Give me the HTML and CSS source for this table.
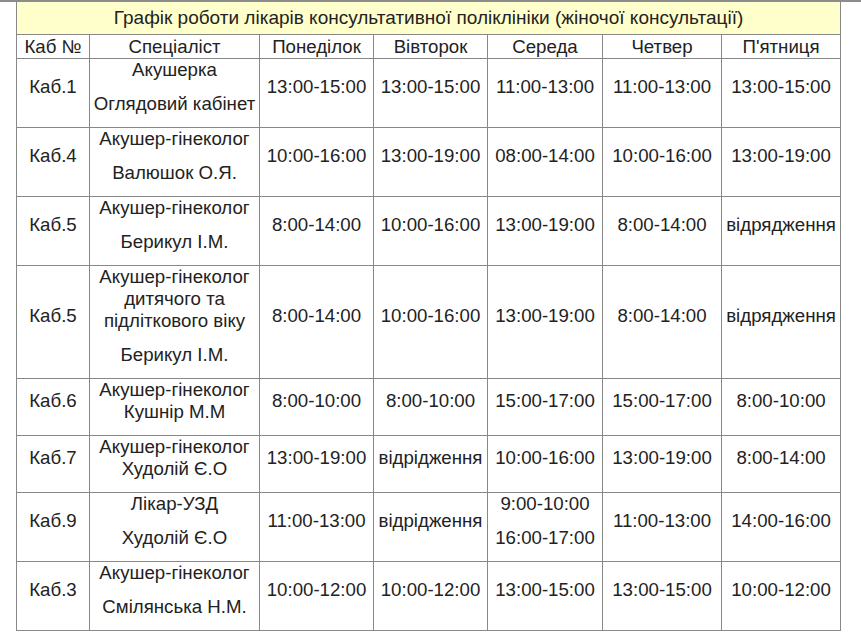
FILE: index.html
```html
<!DOCTYPE html>
<html lang="uk">
<head>
<meta charset="utf-8">
<title>Графік роботи лікарів</title>
<link rel="stylesheet" href="styles.css">
</head>
<body>
<div class="topline"></div>
<table class="schedule">
  <colgroup>
    <col class="c-cab"><col class="c-spec"><col class="c-mon"><col class="c-tue"><col class="c-wed"><col class="c-thu"><col class="c-fri">
  </colgroup>
  <tr class="title-row"><td colspan="7" class="title">Графік роботи лікарів консультативної поліклініки (жіночої консультації)</td></tr>
  <tr class="head-row">
    <td>Каб №</td><td>Спеціаліст</td><td>Понеділок</td><td>Вівторок</td><td>Середа</td><td>Четвер</td><td>П'ятниця</td>
  </tr>
  <tr>
    <td><p>Каб.1</p></td>
    <td><p>Акушерка</p><p>Оглядовий кабінет</p></td>
    <td><p>13:00-15:00</p></td><td><p>13:00-15:00</p></td><td><p>11:00-13:00</p></td><td><p>11:00-13:00</p></td><td><p>13:00-15:00</p></td>
  </tr>
  <tr>
    <td><p>Каб.4</p></td>
    <td><p>Акушер-гінеколог</p><p>Валюшок О.Я.</p></td>
    <td><p>10:00-16:00</p></td><td><p>13:00-19:00</p></td><td><p>08:00-14:00</p></td><td><p>10:00-16:00</p></td><td><p>13:00-19:00</p></td>
  </tr>
  <tr>
    <td><p>Каб.5</p></td>
    <td><p>Акушер-гінеколог</p><p>Берикул І.М.</p></td>
    <td><p>8:00-14:00</p></td><td><p>10:00-16:00</p></td><td><p>13:00-19:00</p></td><td><p>8:00-14:00</p></td><td><p>відрядження</p></td>
  </tr>
  <tr>
    <td><p>Каб.5</p></td>
    <td><p>Акушер-гінеколог<br>дитячого та<br>підліткового віку</p><p>Берикул І.М.</p></td>
    <td><p>8:00-14:00</p></td><td><p>10:00-16:00</p></td><td><p>13:00-19:00</p></td><td><p>8:00-14:00</p></td><td><p>відрядження</p></td>
  </tr>
  <tr>
    <td><p>Каб.6</p></td>
    <td><p>Акушер-гінеколог<br>Кушнір М.М</p></td>
    <td><p>8:00-10:00</p></td><td><p>8:00-10:00</p></td><td><p>15:00-17:00</p></td><td><p>15:00-17:00</p></td><td><p>8:00-10:00</p></td>
  </tr>
  <tr>
    <td><p>Каб.7</p></td>
    <td><p>Акушер-гінеколог<br>Худолій Є.О</p></td>
    <td><p>13:00-19:00</p></td><td><p>відрідження</p></td><td><p>10:00-16:00</p></td><td><p>13:00-19:00</p></td><td><p>8:00-14:00</p></td>
  </tr>
  <tr>
    <td><p>Каб.9</p></td>
    <td><p>Лікар-УЗД</p><p>Худолій Є.О</p></td>
    <td><p>11:00-13:00</p></td><td><p>відрідження</p></td>
    <td><p>9:00-10:00</p><p>16:00-17:00</p></td>
    <td><p>11:00-13:00</p></td><td><p>14:00-16:00</p></td>
  </tr>
  <tr>
    <td><p>Каб.3</p></td>
    <td><p>Акушер-гінеколог</p><p>Смілянська Н.М.</p></td>
    <td><p>10:00-12:00</p></td><td><p>10:00-12:00</p></td><td><p>13:00-15:00</p></td><td><p>13:00-15:00</p></td><td><p>10:00-12:00</p></td>
  </tr>
</table>
</body>
</html>
```

FILE: styles.css
```css
html, body {
  margin: 0;
  padding: 0;
  background: #ffffff;
}
body {
  color: #222222;
  font-family: "Liberation Sans", Arial, sans-serif;
}
.topline {
  height: 2px;
  background: #8c8c8c;
}
.schedule {
  margin-left: 16px;
  border-collapse: collapse;
  table-layout: fixed;
  width: 824px;
}
.c-cab { width: 73px; }
.c-spec { width: 170px; }
.c-mon { width: 114px; }
.c-tue { width: 114px; }
.c-wed { width: 115px; }
.c-thu { width: 119px; }
.c-fri { width: 119px; }
.schedule td {
  border: 1px solid #888888;
  padding: 0 1px;
  text-align: center;
  vertical-align: middle;
  font-size: 18.67px;
  line-height: 22px;
  white-space: nowrap;
}
.schedule td p {
  margin: 0 0 12px;
}
.schedule .title {
  background: #ffffcc;
  font-size: 19px;
  height: 32px;
  padding: 0;
  border-top: none;
}
.head-row td {
  height: 23px;
  padding: 0 1px;
}
```
